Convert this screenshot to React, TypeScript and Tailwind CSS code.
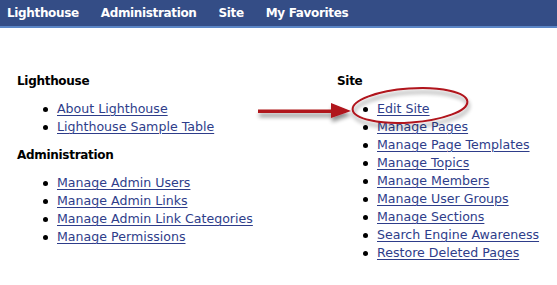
import React from "react";

const font = { fontFamily: '"DejaVu Sans", Verdana, sans-serif' };

function LinkList({ items }: { items: string[] }) {
  return (
    <ul className="mt-[10px] pl-[26px]">
      {items.map((t) => (
        <li key={t} className="flex items-center h-[18px]">
          <span className="w-[5px] h-[5px] rounded-full bg-black mr-[9px]" />
          <a className="text-[#2e3d8a] underline underline-offset-[2px] decoration-[1px]" href="#">
            {t}
          </a>
        </li>
      ))}
    </ul>
  );
}

function Heading({ children, spaced = false }: { children: React.ReactNode; spaced?: boolean }) {
  return (
    <div
      className={`font-bold text-black h-[18px] leading-[18px] text-[12px] tracking-[-0.3px] ${spaced ? "mt-[10px]" : ""}`}
    >
      {children}
    </div>
  );
}

export default function App() {
  return (
    <div className="relative w-[557px] h-[285px] bg-white overflow-hidden text-[12.6px] leading-[18px]" style={font}>
      <div className="h-[28px] bg-[#344d86] border-b-2 border-[#5b86c6] flex items-center pl-[7px] gap-[22px] text-white font-bold text-[12px] tracking-[-0.35px]">
        <span>Lighthouse</span>
        <span>Administration</span>
        <span>Site</span>
        <span>My Favorites</span>
      </div>
      <div className="flex pt-[44px] pl-[17px]">
        <div className="w-[320px]">
          <Heading>Lighthouse</Heading>
          <LinkList items={["About Lighthouse", "Lighthouse Sample Table"]} />
          <Heading spaced>Administration</Heading>
          <LinkList
            items={["Manage Admin Users", "Manage Admin Links", "Manage Admin Link Categories", "Manage Permissions"]}
          />
        </div>
        <div>
          <Heading>Site</Heading>
          <LinkList
            items={[
              "Edit Site",
              "Manage Pages",
              "Manage Page Templates",
              "Manage Topics",
              "Manage Members",
              "Manage User Groups",
              "Manage Sections",
              "Search Engine Awareness",
              "Restore Deleted Pages",
            ]}
          />
        </div>
      </div>
      <svg className="absolute left-0 top-0 pointer-events-none" width="557" height="285">
        <defs>
          <filter id="sh" x="-20%" y="-50%" width="140%" height="200%">
            <feGaussianBlur in="SourceAlpha" stdDeviation="2" />
            <feOffset dx="1" dy="4" result="b" />
            <feComponentTransfer>
              <feFuncA type="linear" slope="0.45" />
            </feComponentTransfer>
            <feMerge>
              <feMergeNode />
              <feMergeNode in="SourceGraphic" />
            </feMerge>
          </filter>
        </defs>
        <g filter="url(#sh)">
          <rect x="258" y="109.5" width="76" height="3.5" fill="#b0121b" />
          <polygon points="331,103 351,111 331,118" fill="#b0121b" />
          <ellipse cx="410" cy="105.5" rx="57.5" ry="17" transform="rotate(-4 410 105.5)" fill="none" stroke="#b0121b" strokeWidth="2" />
        </g>
      </svg>
    </div>
  );
}
